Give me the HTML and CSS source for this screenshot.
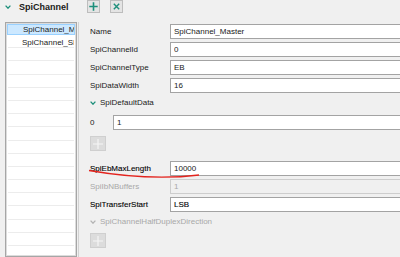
FILE: index.html
```html
<!DOCTYPE html>
<html lang="en">
<head>
    <meta charset="UTF-8">
    <title>SpiChannel</title>
    <link rel="stylesheet" href="styles.css">
</head>
<body>
<div class="app">
    <div class="title">
        <svg class="chev" width="6" height="4" viewBox="0 0 6 4"><path d="M0.6 0.6L3 3.2L5.4 0.6" fill="none" stroke="#1d8f7b" stroke-width="1.3"/></svg>
        <span>SpiChannel</span>
    </div>
    <div class="toolbar">
        <button class="tool"><svg width="9" height="9" viewBox="0 0 9 9"><path d="M4.5 0.3V8.7M0.3 4.5H8.7" stroke="#1d8f7b" stroke-width="1.6"/></svg></button>
        <button class="tool"><svg width="7" height="7" viewBox="0 0 7 7"><path d="M0.8 0.8L6.2 6.2M6.2 0.8L0.8 6.2" stroke="#1d8f7b" stroke-width="1.4"/></svg></button>
    </div>
    <div class="side">
        <ul class="list">
            <li class="item sel">SpiChannel_Master</li>
            <li class="item">SpiChannel_Slave</li>
            <li class="item"></li>
            <li class="item"></li>
            <li class="item"></li>
            <li class="item"></li>
            <li class="item"></li>
            <li class="item"></li>
            <li class="item"></li>
            <li class="item"></li>
            <li class="item"></li>
            <li class="item"></li>
            <li class="item"></li>
            <li class="item"></li>
            <li class="item"></li>
            <li class="item"></li>
            <li class="item"></li>
        </ul>
    </div>
    <div class="form">
        <div class="field"><label>Name</label><input type="text" value="SpiChannel_Master"></div>
        <div class="field"><label>SpiChannelId</label><input type="text" value="0"></div>
        <div class="field"><label>SpiChannelType</label><input type="text" value="EB"></div>
        <div class="field"><label>SpiDataWidth</label><input type="text" value="16"></div>
        <div class="section first">
            <svg width="6" height="4" viewBox="0 0 6 4"><path d="M0.6 0.6L3 3.2L5.4 0.6" fill="none" stroke="#1d8f7b" stroke-width="1.3"/></svg>
            <span>SpiDefaultData</span>
        </div>
        <div class="field index"><label>0</label><input type="text" value="1"></div>
        <button class="add first" disabled><svg width="10" height="10" viewBox="0 0 10 10"><path d="M5 0V10M0 5H10" stroke="#f6f6f6" stroke-width="1.2"/></svg></button>
        <div class="field"><label class="set">SpiEbMaxLength</label><input type="text" value="10000"></div>
        <div class="field off"><label>SpiIbNBuffers</label><input type="text" value="1" disabled></div>
        <div class="field"><label class="set">SpiTransferStart</label><input class="set" type="text" value="LSB"></div>
        <div class="section off">
            <svg width="6" height="4" viewBox="0 0 6 4"><path d="M0.6 0.6L3 3.2L5.4 0.6" fill="none" stroke="#b4b4b4" stroke-width="1.3"/></svg>
            <span>SpiChannelHalfDuplexDirection</span>
        </div>
        <button class="add" disabled><svg width="10" height="10" viewBox="0 0 10 10"><path d="M5 0V10M0 5H10" stroke="#f6f6f6" stroke-width="1.2"/></svg></button>
    </div>
    <svg class="mark" width="400" height="257" viewBox="0 0 400 257"><path d="M89 170.5Q150 181 199 175" fill="none" stroke="#e3241e" stroke-width="1.3"/></svg>
</div>
</body>
</html>
```

FILE: styles.css
```css
*{
    box-sizing: border-box;
}

body{
    margin: 0;
    width: 400px;
    height: 257px;
    overflow: hidden;
    background-color: #f0f0f0;
    font-family: "Liberation Sans", Arial, sans-serif;
    font-size: 8px;
    color: #1a1a1a;
}

.app{
    position: relative;
    display: grid;
    grid-template-columns: 79px 1fr;
    grid-template-rows: 22px 235px;
    height: 257px;
    overflow: hidden;
}

.title{
    display: flex;
    align-items: center;
    gap: 8px;
    height: 13px;
    padding-left: 5px;
    font-size: 9px;
    font-weight: bold;
}

.toolbar{
    display: flex;
    gap: 10px;
    height: 13px;
    padding-left: 8px;
}
.tool{
    width: 13px;
    height: 13px;
    padding: 0;
    border: 1px solid #bdbdbd;
    background-color: #e4e4e4;
    display: flex;
    align-items: center;
    justify-content: center;
}

.side{
    border-right: 1px solid #d2d2d2;
    padding-left: 5px;
}
.list{
    list-style: none;
    margin: 0;
    padding: 1px;
    width: 72px;
    height: 100%;
    background-color: white;
    border: 1px solid #a6a6a6;
    box-shadow: inset 0 0 0 1px #dcdcdc;
    overflow: hidden;
}
.item{
    height: 13.2px;
    margin: 0 1px;
    padding-left: 14px;
    border-bottom: 1px solid #ececec;
    line-height: 15px;
    white-space: nowrap;
    overflow: hidden;
}
.item.sel{
    height: 11px;
    margin: 0;
    padding-left: 15px;
    line-height: 9px;
    border: 1px solid #99d1ff;
    background-color: #cce8ff;
}

.form{
    padding-top: 2px;
    padding-left: 11px;
    overflow: hidden;
}
.field{
    display: flex;
    align-items: center;
    height: 15px;
    margin-bottom: 3px;
}
.field label{
    width: 80px;
    flex: none;
}
.field input{
    flex: none;
    width: 320px;
    height: 15px;
    margin: 0;
    padding: 0 0 0 3px;
    border: 1px solid #a3a3a3;
    background-color: white;
    font-family: "Liberation Sans", Arial, sans-serif;
    font-size: 8px;
    color: #1a1a1a;
}
.field.index{
    margin-bottom: 6px;
}
.field.index label{
    width: 23px;
}
.field.off label{
    color: #a8a8a8;
}
.field.off input{
    background-color: #f0f0f0;
    border-color: #cdcdcd;
    color: #a8a8a8;
}
.set{
    color: #000;
    -webkit-text-stroke: 0.1px #000;
}
.field input.set{
    color: #000;
}

.section{
    display: flex;
    align-items: center;
    gap: 4px;
    height: 13px;
    margin-bottom: 5px;
}
.section.first{
    margin-bottom: 6px;
}
.section.off{
    color: #a8a8a8;
}

.add{
    display: flex;
    align-items: center;
    justify-content: center;
    width: 16px;
    height: 15px;
    padding: 0;
    border: 1px solid #cfcfcf;
    background-color: #dcdcdc;
}
.add.first{
    margin-bottom: 10px;
}

.mark{
    position: absolute;
    left: 0;
    top: 0;
    pointer-events: none;
}
```
